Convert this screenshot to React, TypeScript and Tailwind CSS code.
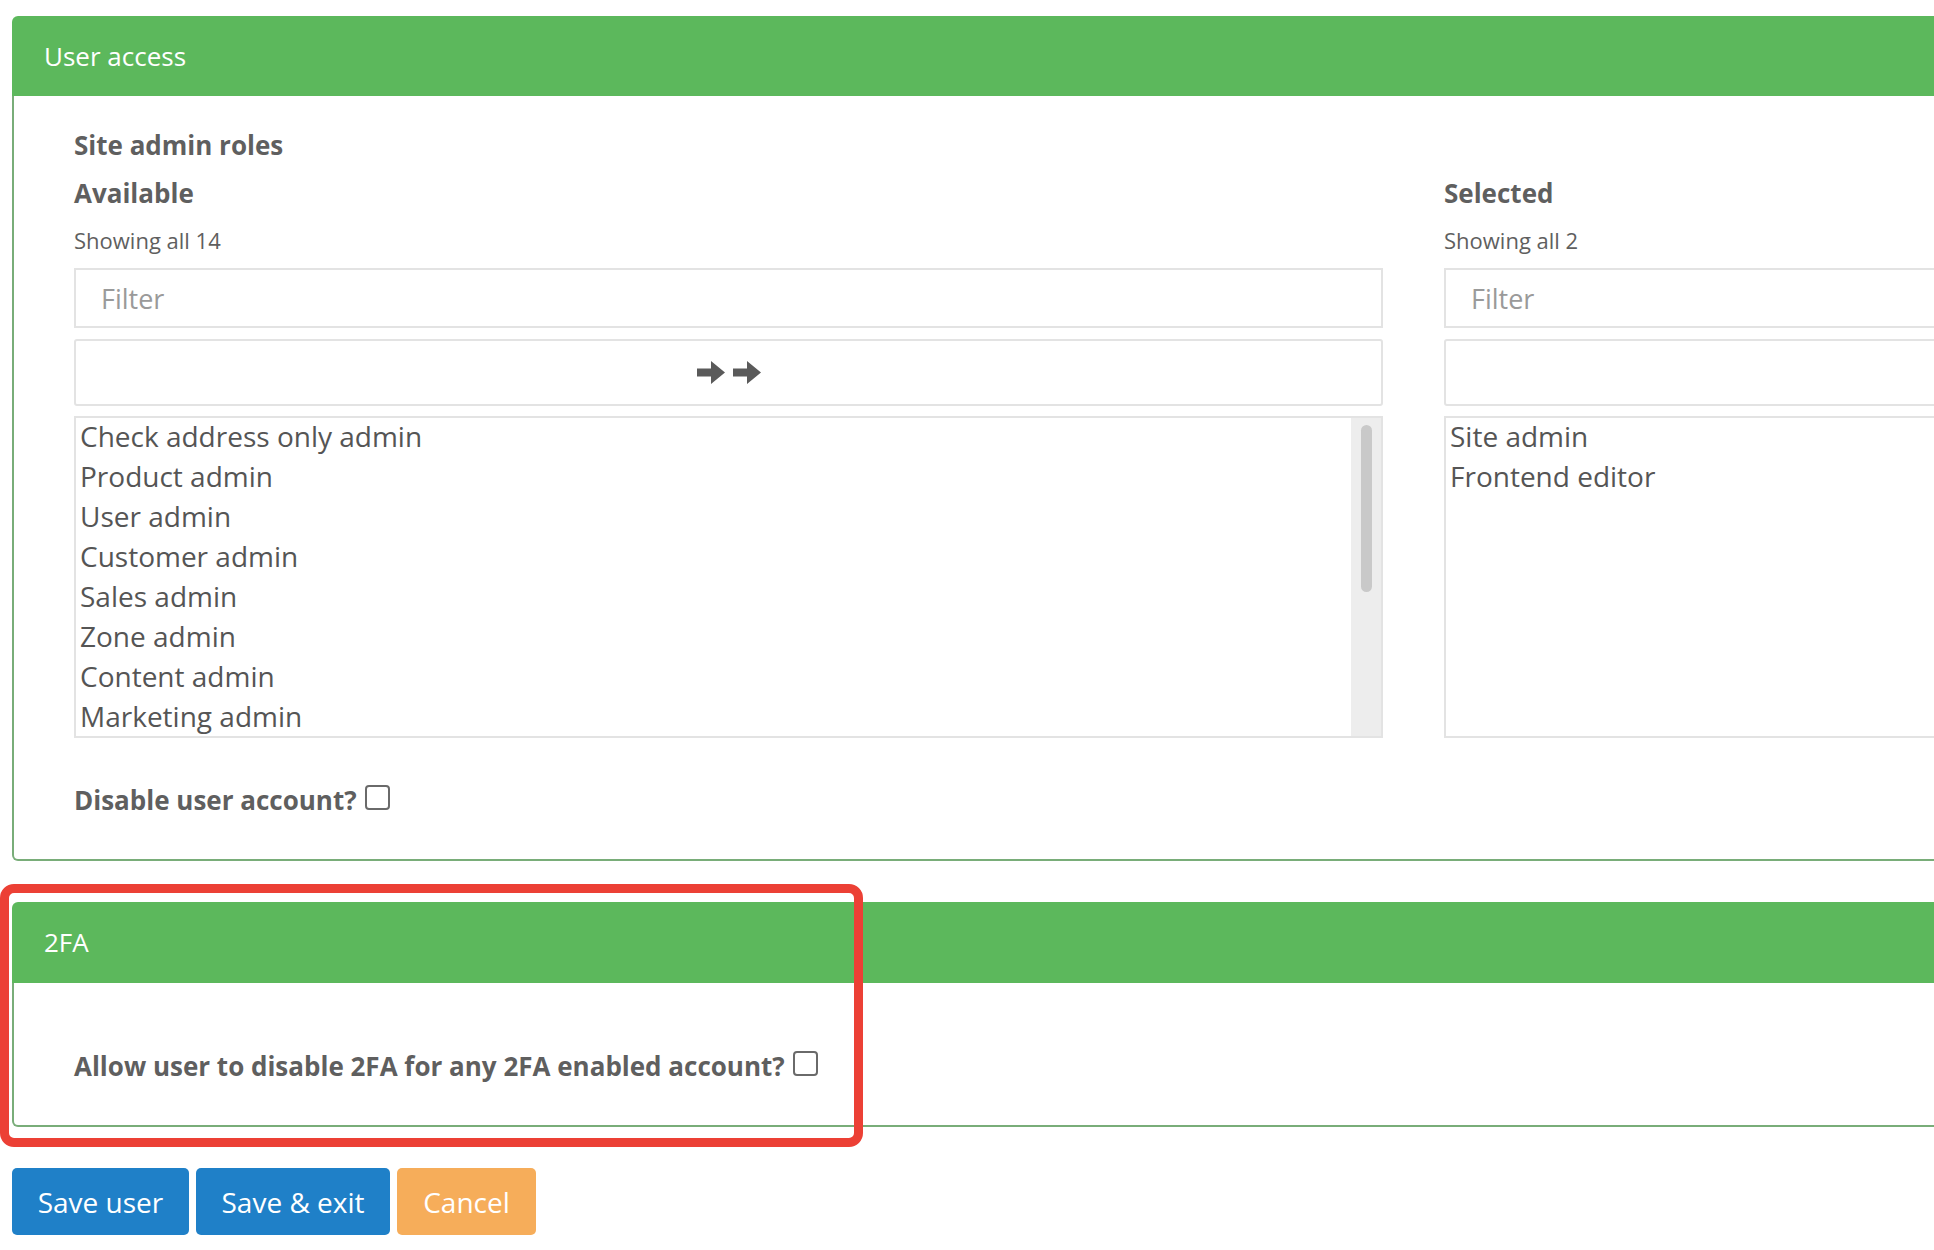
import React from 'react';

// only the rows that fit in the box are drawn; the list holds 14 in total
const available = [
  'Check address only admin',
  'Product admin',
  'User admin',
  'Customer admin',
  'Sales admin',
  'Zone admin',
  'Content admin',
  'Marketing admin',
];

const selected = ['Site admin', 'Frontend editor'];

const ArrowRight = () => (
  <svg width="28" height="23" viewBox="0 0 28 23" className="block">
    <path d="M0 7.5 H14 V0 L28 11.5 L14 23 V15.5 H0 Z" fill="#5a5a5a" />
  </svg>
);

const Checkbox = () => (
  <span className="inline-block w-[25px] h-[25px] ml-[8px] mb-[5px] border-2 border-[#6a6a6a] rounded-[4px] bg-white" />
);

interface PickerProps {
  title: string;
  items: string[];
  total: number;
  withArrows?: boolean;
  scrollable?: boolean;
}

const Picker: React.FC<PickerProps> = ({ title, items, total, withArrows, scrollable }) => (
  <div className="flex flex-col">
    <div className="mt-[8px] h-[40px] leading-[40px] text-[26px] font-bold text-[#5f5f5f]">{title}</div>
    <div className="mt-[11px] h-[32px] leading-[32px] text-[22px] text-[#5f5f5f]">Showing all {total}</div>
    <input
      type="text"
      placeholder="Filter"
      className="mt-[12px] h-[60px] border-2 border-[#e3e3e3] px-[25px] text-[27px] text-[#555] placeholder:text-[#9a9a9a] outline-none"
    />
    <button className="mt-[11px] h-[67px] border-2 border-[#e3e3e3] rounded-[3px] bg-white flex items-center justify-center gap-[8px]">
      {withArrows && (
        <>
          <ArrowRight />
          <ArrowRight />
        </>
      )}
    </button>
    <div className="mt-[10px] h-[322px] border-2 border-[#e3e3e3] flex overflow-hidden">
      <ul className="flex-1 pl-[4px] -mt-[2px] text-[28px] leading-[40px] text-[#555]">
        {items.map((item) => (
          <li key={item} className="h-[40px] whitespace-nowrap">{item}</li>
        ))}
      </ul>
      {scrollable && (
        <div className="w-[30px] bg-[#ededed] flex justify-center pt-[7px]">
          <div className="w-[11px] h-[167px] rounded-full bg-[#c9c9c9]" />
        </div>
      )}
    </div>
  </div>
);

export default function App() {
  return (
    <div className="relative w-[1934px] h-[1250px] overflow-hidden bg-white font-['Open_Sans',sans-serif]">
      <div className="pl-[12px] pt-[16px]">
        {/* User access panel */}
        <section className="w-[2803px]">
          <div className="h-[80px] bg-[#5cb85c] rounded-t-[6px] px-[32px] flex items-center text-white text-[26px]">
            User access
          </div>
          <div className="border-2 border-t-0 border-[#79ad79] rounded-b-[6px] px-[60px] pt-[29px] pb-[39px]">
            <div className="h-[40px] leading-[40px] text-[26px] font-bold text-[#5f5f5f]">Site admin roles</div>
            <div className="grid grid-cols-[1309px_1309px] gap-x-[61px]">
              <Picker title="Available" items={available} total={14} withArrows scrollable />
              <Picker title="Selected" items={selected} total={2} />
            </div>
            <div className="mt-[42px] h-[40px] flex items-center text-[26px] font-bold text-[#5f5f5f]">
              Disable user account?
              <Checkbox />
            </div>
          </div>
        </section>

        {/* 2FA panel */}
        <section className="w-[2803px] mt-[41px]">
          <div className="h-[81px] bg-[#5cb85c] rounded-t-[6px] px-[32px] flex items-center text-white text-[26px]">
            2FA
          </div>
          <div className="border-2 border-t-0 border-[#79ad79] rounded-b-[6px] px-[60px] pt-[63px] pb-[39px]">
            <div className="h-[40px] flex items-center text-[26px] font-bold text-[#5f5f5f]">
              Allow user to disable 2FA for any 2FA enabled account?
              <Checkbox />
            </div>
          </div>
        </section>

        <div className="mt-[41px] flex gap-[7px]">
          <button className="w-[177px] h-[67px] rounded-[5px] bg-[#1f80c8] text-white text-[28px]">Save user</button>
          <button className="w-[194px] h-[67px] rounded-[5px] bg-[#1f80c8] text-white text-[28px]">Save &amp; exit</button>
          <button className="w-[139px] h-[67px] rounded-[5px] bg-[#f6ad5a] text-white text-[28px]">Cancel</button>
        </div>
      </div>

      {/* annotation highlight */}
      <div className="absolute left-0 top-[884px] w-[863px] h-[263px] border-[9px] border-[#ec4035] rounded-[14px] pointer-events-none" />
    </div>
  );
}
